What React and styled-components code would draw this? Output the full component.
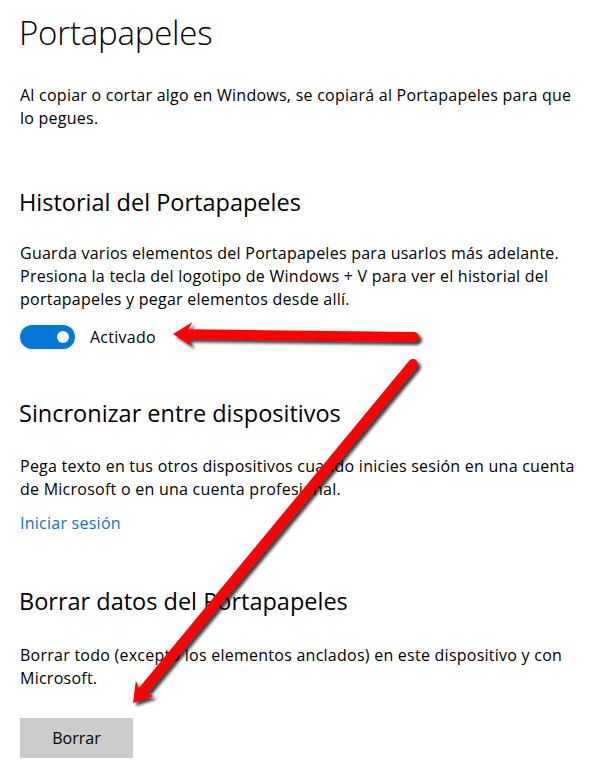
import React from 'react';
import styled, { createGlobalStyle } from 'styled-components';

const GlobalStyle = createGlobalStyle`
  html, body {
    margin: 0;
    padding: 0;
    background: #ffffff;
  }
  body {
    font-family: "Open Sans", "Noto Sans", "Liberation Sans", sans-serif;
    color: #000000;
  }
`;

const Page = styled.div`
  position: relative;
  width: 602px;
  height: 779px;
  padding: 13px 20px 0 19px;
  box-sizing: border-box;
  overflow: hidden;
`;

const Title = styled.h1`
  margin: 0;
  font-size: 33px;
  font-weight: 300;
  line-height: 40px;
  letter-spacing: -0.2px;
`;

const Heading = styled.h2`
  margin: ${p => p.$top}px 0 0;
  font-size: 23.5px;
  font-weight: 400;
  line-height: 30px;
  letter-spacing: 0;
`;

const Text = styled.p`
  margin: ${p => p.$top}px 0 0 1px;
  font-size: 16px;
  line-height: 23px;
  letter-spacing: 0.25px;
  white-space: nowrap;
`;

const ToggleRow = styled.div`
  display: flex;
  align-items: center;
  gap: 15px;
  margin: 14px 0 0 1px;
  height: 24px;
`;

const Switch = styled.div`
  width: 55px;
  height: 24px;
  border-radius: 12px;
  background: #0078d7;
  display: flex;
  align-items: center;
  justify-content: flex-end;
  padding-right: 6px;
  box-sizing: border-box;
`;

const Knob = styled.span`
  width: 12px;
  height: 12px;
  border-radius: 50%;
  background: #ffffff;
`;

const Label = styled.span`
  font-size: 16px;
  letter-spacing: 0.25px;
`;

const Link = styled.a`
  display: block;
  margin: 11px 0 0 1px;
  font-size: 16px;
  line-height: 23px;
  letter-spacing: 0.25px;
  color: #0a73d0;
  text-decoration: none;
`;

const Button = styled.button`
  display: block;
  margin: 28px 0 0 1px;
  width: 113px;
  height: 40px;
  border: none;
  background: #cccccc;
  font-family: inherit;
  font-size: 16px;
  color: #000000;
  padding: 0;
`;

const Overlay = styled.svg`
  position: absolute;
  left: 0;
  top: 0;
  pointer-events: none;
`;

function Arrow({ x1, y1, x2, y2 }) {
  const dx = x2 - x1;
  const dy = y2 - y1;
  const len = Math.hypot(dx, dy);
  const ux = dx / len;
  const uy = dy / len;
  const px = -uy;
  const py = ux;
  const headLen = 19;
  const headHalf = 12;
  const notch = 4;
  const bx = x2 - ux * headLen;
  const by = y2 - uy * headLen;
  const nx = x2 - ux * (headLen - notch);
  const ny = y2 - uy * (headLen - notch);
  const pts = [
    [x2, y2],
    [bx + px * headHalf, by + py * headHalf],
    [nx + px * 4, ny + py * 4],
    [nx - px * 4, ny - py * 4],
    [bx - px * headHalf, by - py * headHalf],
  ]
    .map(p => p.join(','))
    .join(' ');
  return (
    <g>
      <line x1={x1} y1={y1} x2={nx} y2={ny} stroke="#ff0000" strokeWidth="10" strokeLinecap="round" />
      <polygon points={pts} fill="#ff0000" />
    </g>
  );
}

export default function App() {
  return (
    <>
      <GlobalStyle />
      <Page>
        <Title>Portapapeles</Title>
        <Text $top={31}>
          Al copiar o cortar algo en Windows, se copiará al Portapapeles para que
          <br />
          lo pegues.
        </Text>

        <Heading $top={57}>Historial del Portapapeles</Heading>
        <Text $top={25}>
          Guarda varios elementos del Portapapeles para usarlos más adelante.
          <br />
          Presiona la tecla del logotipo de Windows + V para ver el historial del
          <br />
          portapapeles y pegar elementos desde allí.
        </Text>
        <ToggleRow>
          <Switch>
            <Knob />
          </Switch>
          <Label>Activado</Label>
        </ToggleRow>

        <Heading $top={49}>Sincronizar entre dispositivos</Heading>
        <Text $top={27}>
          Pega texto en tus otros dispositivos cuando inicies sesión en una cuenta
          <br />
          de Microsoft o en una cuenta profesional.
        </Text>
        <Link href="#">Iniciar sesión</Link>

        <Heading $top={51}>Borrar datos del Portapapeles</Heading>
        <Text $top={28}>
          Borrar todo (excepto los elementos anclados) en este dispositivo y con
          <br />
          Microsoft.
        </Text>
        <Button>Borrar</Button>

        <Overlay width="602" height="779" viewBox="0 0 602 779">
          <defs>
            <filter id="shadow" x="-20%" y="-20%" width="140%" height="140%">
              <feDropShadow dx="3" dy="3" stdDeviation="1.5" floodColor="#000000" floodOpacity="0.75" />
            </filter>
          </defs>
          <g filter="url(#shadow)">
            <Arrow x1={414} y1={337} x2={173} y2={334} />
            <Arrow x1={413} y1={364} x2={133} y2={703} />
          </g>
        </Overlay>
      </Page>
    </>
  );
}
